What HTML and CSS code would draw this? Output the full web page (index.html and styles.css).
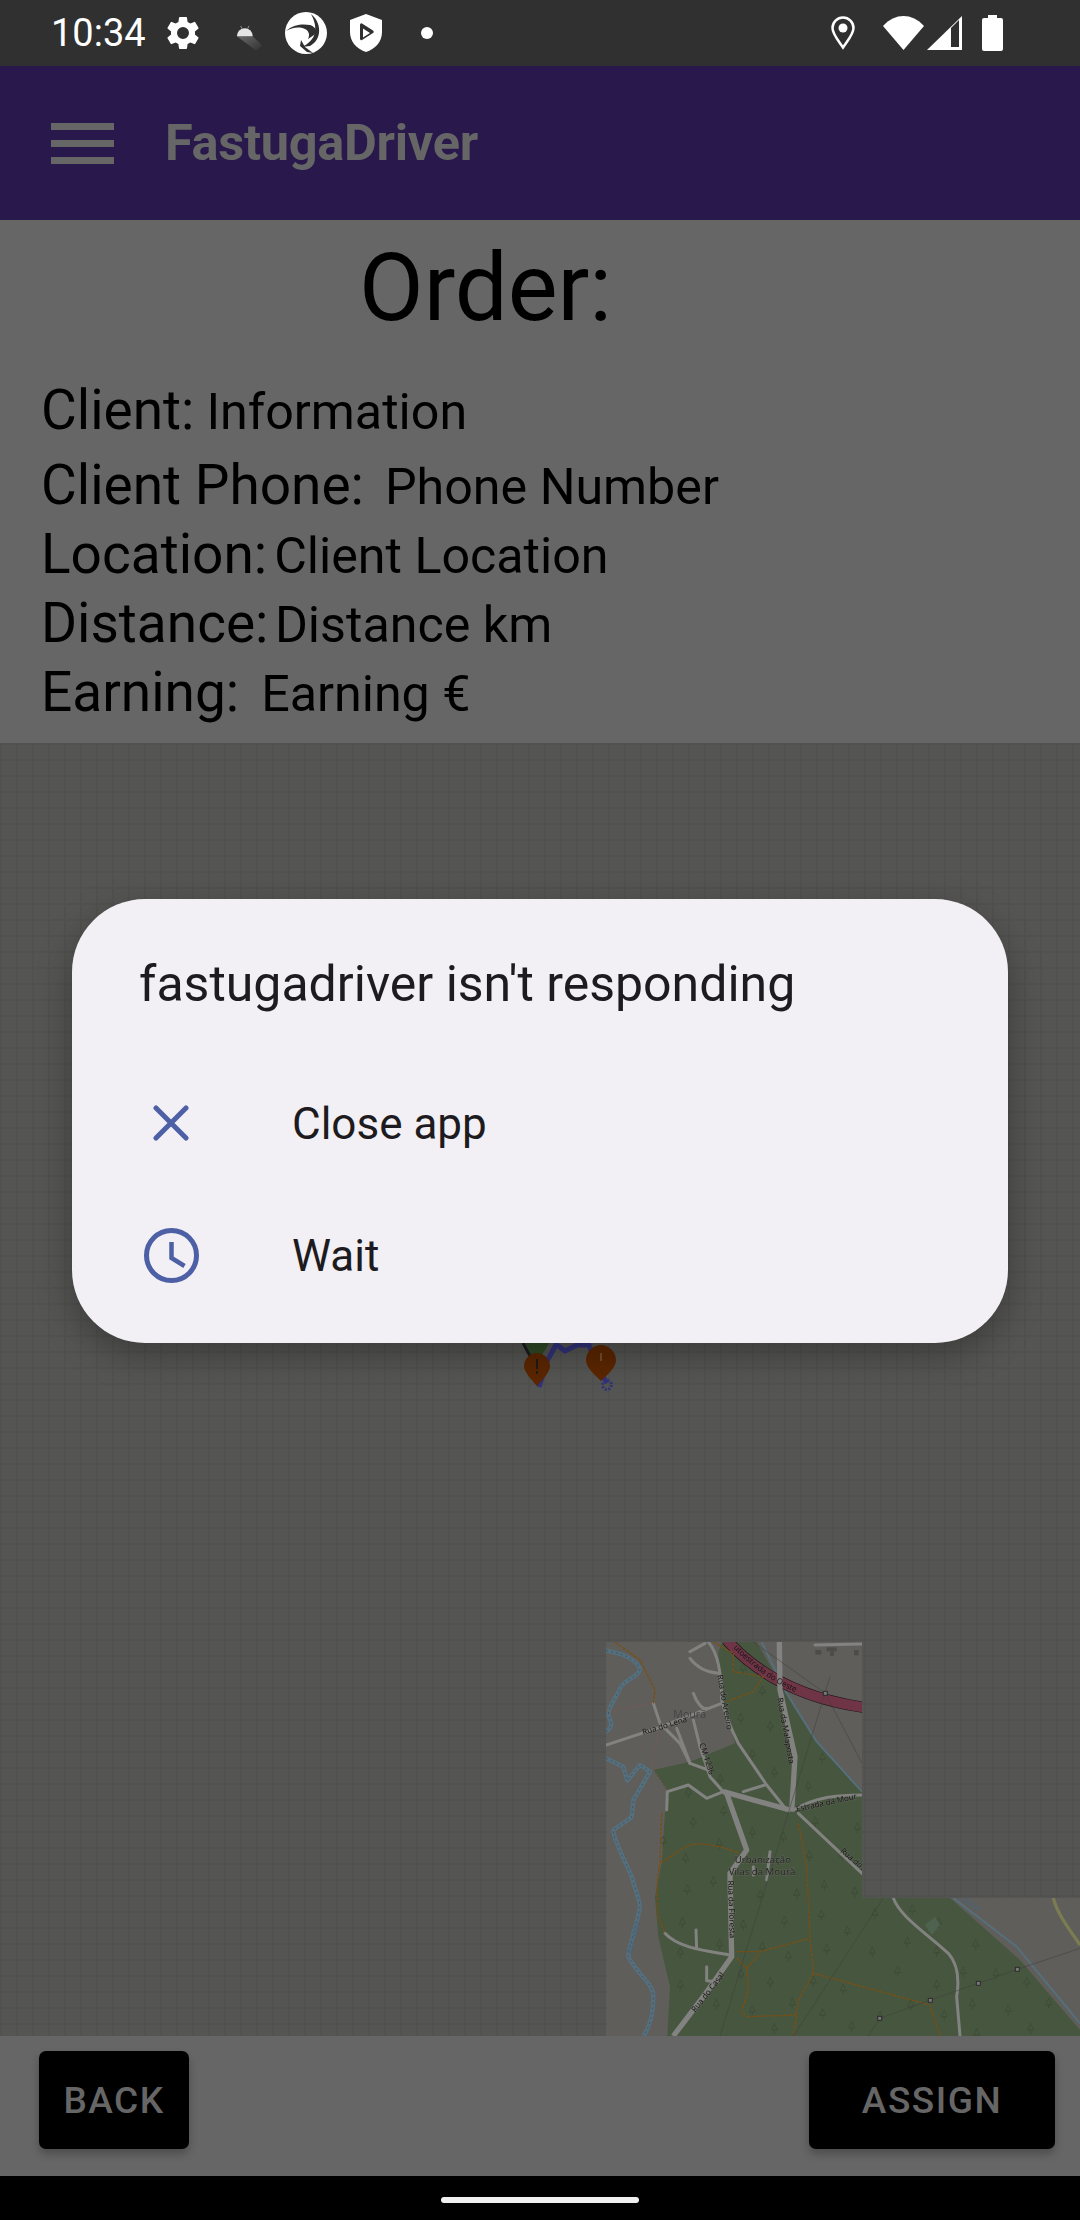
FILE: index.html
```html
<!DOCTYPE html>
<html lang="en">
<head>
<meta charset="utf-8">
<title>FastugaDriver</title>
<link rel="stylesheet" href="styles.css">
</head>
<body>
<div class="screen">
  <header class="status">
    <span class="time">10:34</span>
    <svg class="ic-gear" viewBox="0 0 24 24"><path fill="#fff" d="M19.14 12.94c.04-.3.06-.61.06-.94 0-.32-.02-.64-.07-.94l2.03-1.58a.49.49 0 0 0 .12-.61l-1.92-3.32a.49.49 0 0 0-.59-.22l-2.39.96c-.5-.38-1.03-.7-1.62-.94l-.36-2.54a.48.48 0 0 0-.48-.41h-3.84a.48.48 0 0 0-.47.41l-.36 2.54c-.59.24-1.13.57-1.62.94l-2.39-.96a.49.49 0 0 0-.59.22L2.74 8.87a.48.48 0 0 0 .12.61l2.03 1.58c-.05.3-.09.63-.09.94s.02.64.07.94l-2.03 1.58a.49.49 0 0 0-.12.61l1.92 3.32c.12.22.37.29.59.22l2.39-.96c.5.38 1.03.7 1.62.94l.36 2.54c.05.24.24.41.48.41h3.84c.24 0 .44-.17.47-.41l.36-2.54c.59-.24 1.13-.56 1.62-.94l2.39.96c.22.08.47 0 .59-.22l1.92-3.32a.48.48 0 0 0-.12-.61l-2.01-1.58zM12 15.6A3.6 3.6 0 1 1 12 8.4a3.6 3.6 0 0 1 0 7.2z"/></svg>
    <svg class="ic-android" viewBox="0 0 28 28"><defs><linearGradient id="shade" x1="0" y1="0" x2="1" y2="1"><stop offset="0" stop-color="#6a6a6a"/><stop offset="1" stop-color="#303030"/></linearGradient></defs><path fill="url(#shade)" d="M1 12h17l10 10-6 6z"/><path fill="#e4e4e4" d="M1 12a8.500 8.500 0 0 1 17 0z"/><path stroke="#999" stroke-width="1" d="M5 1l1.500 3M14 1l-1.500 3"/></svg>
    <svg class="ic-logo" viewBox="0 0 44 44"><circle cx="22" cy="22" r="21" fill="#fff"/><path fill="#303030" d="M2 20c8-7 17-7 24-6 4 1 7 5 7 8l-9 6c2-4 1-8-3-10-7-3-13-1-19 2z"/><path fill="#303030" d="M27 3c6 5 9 12 8 19-1 6-4 10-9 13l-8 1c6-3 12-8 13-15 1-7-1-12-4-18z"/><path fill="#303030" d="M17 29l4 7 8 6-6-1-7-6z"/></svg>
    <svg class="ic-shield" viewBox="0 0 32 38"><path fill="#fff" d="M16 0L32 6v12c0 10-7 17-16 20C7 35 0 28 0 18V6z"/><path fill="#303030" d="M10 11c0-1 1-2 2-1.500l11 7c1 .8 1 2 0 2.500l-11 7c-1 .5-2 0-2-1.500z"/><path fill="#fff" d="M13 14.500v9l7-4.500z"/></svg>
    <span class="dot"></span>
    <span class="spacer"></span>
    <svg class="ic-pin" viewBox="0 0 24 34"><path fill="none" stroke="#fff" stroke-width="2.500" d="M12 31.500C7 24 1.500 18 1.500 12a10.500 10.500 0 0 1 21 0c0 6-5.500 12-10.500 19.500z"/><circle cx="12" cy="12" r="4.500" fill="#fff"/></svg>
    <svg class="ic-wifi" viewBox="0 0 41 34"><path fill="#fff" d="M20.500 34L0 10C12-3.300 29-3.300 41 10z"/></svg>
    <svg class="ic-signal" viewBox="0 0 35 34"><path fill="#fff" d="M0 34L35 0v34z"/><path fill="#303030" d="M24 12l8-8v27h-8z"/></svg>
    <svg class="ic-battery" viewBox="0 0 21 36"><path fill="#fff" d="M6 0h9v3h4a2 2 0 0 1 2 2v29a2 2 0 0 1-2 2H2a2 2 0 0 1-2-2V5a2 2 0 0 1 2-2h4z"/></svg>
  </header>

  <div class="appbar">
    <div class="burger"><i></i><i></i><i></i></div>
    <span class="apptitle">FastugaDriver</span>
  </div>

  <section class="order">
    <h1 class="heading">Order:</h1>
    <div class="row row-first"><span class="label">Client:</span><span class="value v-client">Information</span></div>
    <div class="row"><span class="label">Client Phone:</span><span class="value v-phone">Phone Number</span></div>
    <div class="row"><span class="label">Location:</span><span class="value v-loc">Client Location</span></div>
    <div class="row"><span class="label">Distance:</span><span class="value v-dist">Distance km</span></div>
    <div class="row"><span class="label">Earning:</span><span class="value v-earn">Earning €</span></div>
  </section>

  <div class="map">
    <svg class="route" viewBox="0 0 120 70">
      <path fill="#2f4a26" d="M4 0h24l-8 14-4 8z" transform="translate(4 0)"/>
      <path fill="none" stroke="#1c1c1c" stroke-width="3" d="M6 0l12 22"/>
      <path fill="none" stroke="#32327a" stroke-width="5" d="M22 44l8-26 10-18M40 2l8 6 12-6 12 0 8 22 10 16"/>
      <circle cx="90" cy="42" r="4.500" fill="none" stroke="#32327a" stroke-width="3" stroke-dasharray="2 1.500"/>
      <path fill="#5c2600" d="M20 10c7 0 13 6 13 13 0 6-7 13-13 20C14 36 7 29 7 23c0-7 6-13 13-13z"/>
      <path stroke="#1c1c1c" stroke-width="2" d="M20 16v10M20 28v3"/>
      <path fill="#5c2600" d="M84 2c8 0 15 7 15 15 0 8-9 15-15 21-6-6-15-13-15-21C69 9 76 2 84 2z"/>
      <path stroke="#70502e" stroke-width="2" d="M84 10v8"/>
    </svg>
    <svg class="tiles" viewBox="48 66 1422 1182">
      <defs>
        <clipPath id="tile-clip"><path d="M48 66H816V834H1470V1248H48z"/></clipPath>
        <g id="tree"><path fill="none" stroke="#3b4834" stroke-width="2" d="M0 32V20M0 0L-9 20H9z"/></g>
      </defs>
      <g clip-path="url(#tile-clip)">
        <rect x="48" y="66" width="1422" height="1182" fill="#5f5e5a"/>
        <path fill="#47563f" d="M395 66H500L600 240L680 365L816 510L1080 834L1290 1020L1470 1230V1248H232L240 1100L205 950L195 830L215 730L225 580L230 510L190 450L300 425L435 370L395 230L385 100z"/>
        <g>
          <use href="#tree" x="460" y="130"/><use href="#tree" x="517" y="198"/><use href="#tree" x="452" y="280"/><use href="#tree" x="541" y="304"/><use href="#tree" x="487" y="388"/><use href="#tree" x="553" y="442"/><use href="#tree" x="391" y="462"/><use href="#tree" x="655" y="484"/><use href="#tree" x="697" y="398"/><use href="#tree" x="295" y="502"/><use href="#tree" x="401" y="558"/><use href="#tree" x="310" y="592"/><use href="#tree" x="487" y="622"/><use href="#tree" x="580" y="636"/><use href="#tree" x="676" y="590"/><use href="#tree" x="802" y="608"/><use href="#tree" x="219" y="648"/><use href="#tree" x="287" y="700"/><use href="#tree" x="388" y="656"/><use href="#tree" x="658" y="692"/><use href="#tree" x="757" y="690"/><use href="#tree" x="370" y="770"/><use href="#tree" x="292" y="794"/><use href="#tree" x="511" y="810"/><use href="#tree" x="620" y="806"/><use href="#tree" x="703" y="780"/><use href="#tree" x="794" y="800"/><use href="#tree" x="277" y="892"/><use href="#tree" x="460" y="900"/><use href="#tree" x="583" y="888"/><use href="#tree" x="694" y="870"/><use href="#tree" x="772" y="918"/><use href="#tree" x="855" y="866"/><use href="#tree" x="967" y="854"/><use href="#tree" x="1046" y="892"/><use href="#tree" x="952" y="950"/><use href="#tree" x="847" y="980"/><use href="#tree" x="1040" y="978"/><use href="#tree" x="1157" y="958"/><use href="#tree" x="389" y="958"/><use href="#tree" x="517" y="966"/><use href="#tree" x="710" y="972"/><use href="#tree" x="595" y="994"/><use href="#tree" x="271" y="982"/><use href="#tree" x="923" y="1038"/><use href="#tree" x="1120" y="1040"/><use href="#tree" x="1218" y="1046"/><use href="#tree" x="1310" y="1072"/><use href="#tree" x="453" y="1048"/><use href="#tree" x="541" y="1072"/><use href="#tree" x="670" y="1068"/><use href="#tree" x="760" y="1092"/><use href="#tree" x="1040" y="1080"/><use href="#tree" x="271" y="1080"/><use href="#tree" x="379" y="1138"/><use href="#tree" x="487" y="1156"/><use href="#tree" x="607" y="1134"/><use href="#tree" x="698" y="1166"/><use href="#tree" x="870" y="1174"/><use href="#tree" x="962" y="1140"/><use href="#tree" x="1063" y="1170"/><use href="#tree" x="1147" y="1138"/><use href="#tree" x="1255" y="1154"/><use href="#tree" x="1376" y="1134"/><use href="#tree" x="553" y="1210"/><use href="#tree" x="785" y="1204"/><use href="#tree" x="1322" y="1210"/><use href="#tree" x="1160" y="1226"/>
        </g>
        <path fill="#4f6250" d="M1005 915l30-25 15 25-25 30z"/>
        <g class="river-wide">
          <path d="M48 92C90 100 130 110 150 145C150 170 100 180 90 205C75 240 55 260 55 285C65 310 70 320 48 335"/>
          <path d="M48 415L100 440L112 482L150 435L180 455L130 540L125 592L70 630C70 660 100 710 125 770C135 810 150 840 150 860C140 920 115 980 115 1010C140 1060 190 1090 190 1130C190 1180 180 1220 160 1248"/>
        </g>
        <g class="river-core">
          <path d="M48 92C90 100 130 110 150 145C150 170 100 180 90 205C75 240 55 260 55 285C65 310 70 320 48 335"/>
          <path d="M48 415L100 440L112 482L150 435L180 455L130 540L125 592L70 630C70 660 100 710 125 770C135 810 150 840 150 860C140 920 115 980 115 1010C140 1060 190 1090 190 1130C190 1180 180 1220 160 1248"/>
        </g>
        <g class="stream">
          <path d="M515 66L590 220L680 365L816 515"/>
          <path d="M1090 834L1280 980L1470 1210"/>
        </g>
        <path fill="none" stroke="#1d1518" stroke-width="34" d="M410 60C490 150 620 232 820 262"/>
        <path fill="none" stroke="#6f3547" stroke-width="30" d="M410 60C490 150 620 232 820 262"/>
        <path fill="none" stroke="#7c7c52" stroke-width="10" d="M1390 834C1400 880 1440 930 1470 975"/>
        <g class="road">
          <path d="M355 66C385 100 395 170 395 240C410 300 430 340 445 370L530 495L590 570"/>
          <path d="M48 375L200 325L395 250"/>
          <path d="M190 250L210 310L270 370L300 430L355 450"/>
          <path d="M260 325L300 430"/>
          <path d="M310 300L330 380L360 470L400 515"/>
          <path d="M230 570L232 515L295 495L350 535L400 515"/>
          <path d="M610 570C680 530 740 525 816 525"/>
          <path d="M625 580L816 760"/>
          <path d="M910 834C930 890 1010 940 1075 1000C1110 1040 1105 1100 1100 1130L1110 1248"/>
          <path d="M225 940C260 980 330 990 420 1005"/>
          <path d="M318 930L320 985M350 1040L350 1082L385 1085"/>
          <path d="M300 95L345 70M300 115Q330 155 385 160M310 220C320 250 340 270 350 265"/>
          <path d="M675 75L816 72M490 740V765M540 695L530 780"/>
          <path d="M460 515L525 495"/>
        </g>
        <g class="road-wide">
          <path d="M568 66L570 210L590 300L615 410L605 575"/>
          <path d="M400 515L600 570"/>
          <path d="M410 520L470 690L420 760L425 1010L340 1130L250 1248"/>
        </g>
        <g class="track">
          <path d="M75 66L150 120L195 210L190 250"/>
          <path d="M215 580L210 730C205 760 195 810 205 890L225 940"/>
          <path d="M213 728C250 710 280 672 320 672C370 672 410 685 450 700"/>
          <path d="M625 610L650 740L660 950L670 1060L1020 1155L1050 1248"/>
          <path d="M440 995L510 995L660 955"/>
          <path d="M440 1015L470 1045L510 1000"/>
          <path d="M470 1045L475 1110L455 1175L470 1190L620 1185L610 1248"/>
          <path d="M670 1060L625 1140L620 1185"/>
          <path d="M370 66L430 100L430 155L520 170L490 215L410 245"/>
        </g>
        <g class="redpath">
          <path d="M50 275L190 250"/>
          <path d="M205 335L185 440L230 510"/>
        </g>
        <g class="power">
          <path d="M720 170L390 1248"/>
          <path d="M490 66L706 220L816 430"/>
          <path d="M880 834L610 1248"/>
          <path d="M835 1248L870 1195L1020 1140L1165 1090L1282 1048L1470 985"/>
        </g>
        <g class="pylon">
          <rect x="700" y="214" width="12" height="12"/><rect x="863" y="1189" width="12" height="12"/><rect x="1015" y="1135" width="12" height="12"/><rect x="1159" y="1084" width="12" height="12"/><rect x="1276" y="1042" width="12" height="12"/>
        </g>
        <g fill="#4d4c49"><rect x="676" y="90" width="18" height="14"/><rect x="710" y="82" width="30" height="12"/><rect x="720" y="94" width="12" height="14"/><rect x="792" y="90" width="14" height="16"/></g>
        <path id="mway" fill="none" d="M420 74C495 152 570 205 668 236"/>
        <text class="lbl lbl-road lbl-nohalo"><textPath href="#mway" startOffset="14">utoestrada do Oeste</textPath></text>
        <text class="lbl lbl-place" x="250" y="294">Mourã</text>
        <text class="lbl lbl-road" transform="translate(160 345) rotate(-17)">Rua do Lena</text>
        <text class="lbl lbl-road" transform="translate(382 166) rotate(80)">Rua do Areeiro</text>
        <text class="lbl lbl-road" transform="translate(562 235) rotate(80)">Rua da Malaposta</text>
        <text class="lbl lbl-road" transform="translate(328 372) rotate(72)">CM 1236</text>
        <text class="lbl lbl-road" transform="translate(620 575) rotate(-12)">Estrada da Mour</text>
        <text class="lbl lbl-road" transform="translate(750 695) rotate(40)">Rua dos</text>
        <text class="lbl lbl-area" x="434" y="728">Urbanização</text>
        <text class="lbl lbl-area" x="416" y="766">Vilas da Mourã</text>
        <text class="lbl lbl-road" transform="translate(414 782) rotate(88)">Rua da Floresta</text>
        <text class="lbl lbl-road" transform="translate(316 1178) rotate(-52)">Rua do Casal</text>
        <text class="lbl lbl-water" transform="translate(128 1004) rotate(-78)">Rio Lena</text>
        <text class="lbl lbl-water" transform="translate(1115 842) rotate(35)">neiro</text>
      </g>
    </svg>
  </div>

  <div class="actions">
    <button class="btn btn-back">BACK</button>
    <button class="btn btn-assign">ASSIGN</button>
  </div>

  <footer class="navbar"><span class="handle"></span></footer>

  <div class="dialog">
    <p class="dlg-title">fastugadriver isn't responding</p>
    <div class="dlg-item">
      <span class="dlg-icon"><svg class="ic-x" viewBox="0 0 36 36"><path fill="none" stroke="#4d5fa5" stroke-width="5" stroke-linecap="round" d="M3 3l30 30M33 3L3 33"/></svg></span>
      <span class="dlg-text">Close app</span>
    </div>
    <div class="dlg-item">
      <span class="dlg-icon"><svg class="ic-clock" viewBox="0 0 55 55"><circle cx="27.500" cy="27.500" r="25" fill="none" stroke="#4d5fa5" stroke-width="5"/><path fill="none" stroke="#4d5fa5" stroke-width="4.500" d="M27.500 14v16l13 8"/></svg></span>
      <span class="dlg-text">Wait</span>
    </div>
  </div>
</div>
</body>
</html>
```
FILE: styles.css
```css
* { box-sizing: border-box; }
html, body { margin: 0; padding: 0; }
body { width: 1080px; height: 2220px; overflow: hidden; font-family: Roboto, "Liberation Sans", sans-serif; background: #000; }
.screen { position: relative; width: 1080px; height: 2220px; display: flex; flex-direction: column; }

.status { height: 66px; flex: none; background: #303030; display: flex; align-items: center; padding-left: 51px; color: #fff; }
.time { font-size: 38px; width: 96px; line-height: 66px; }
.status svg { display: block; flex: none; }
.ic-gear { width: 40px; height: 40px; margin-left: 16px; }
.ic-android { width: 26px; height: 26px; margin-left: 33px; margin-top: 10px; }
.ic-logo { width: 44px; height: 44px; margin-left: 22px; }
.ic-shield { width: 32px; height: 38px; margin-left: 22px; }
.dot { width: 12px; height: 12px; border-radius: 50%; background: #fff; margin-left: 39px; }
.spacer { flex: 1; }
.ic-pin { width: 24px; height: 34px; }
.ic-wifi { width: 41px; height: 34px; margin-left: 28px; }
.ic-signal { width: 35px; height: 34px; margin-left: 3px; }
.ic-battery { width: 21px; height: 36px; margin-left: 20px; margin-right: 77px; }

.appbar { height: 154px; flex: none; background: #29184b; display: flex; align-items: center; padding-left: 51px; color: #666; }
.burger { width: 63px; display: flex; flex-direction: column; gap: 10px; }
.burger i { display: block; height: 7px; background: #666; }
.apptitle { font-size: 50.500px; font-weight: 700; letter-spacing: -0.3px; margin-left: 51px; line-height: 56px; }

.order { height: 523px; flex: none; background: #666; color: #000; padding-left: 41px; }
.heading { margin: 0; padding-left: 318px; font-weight: 400; font-size: 94px; line-height: 110px; height: 156px; padding-top: 13px; }
.row { display: flex; align-items: baseline; height: 69px; line-height: 69px; }
.row-first { height: 75px; }
.label { font-size: 55px; }
.value { font-size: 50.200px; }
.v-client { margin-left: 12px; }
.v-phone { margin-left: 21px; }
.v-loc { margin-left: 7px; }
.v-dist { margin-left: 6.500px; }
.v-earn { margin-left: 22px; }

.map { position: relative; flex: 1; min-height: 0; overflow: hidden;
  background-color: #555553;
  background-image: linear-gradient(#515150 2px, transparent 2px), linear-gradient(90deg, #515150 2px, transparent 2px);
  background-size: 16px 16px; }
.tiles { position: absolute; left: 606px; top: 899px; width: 474px; height: 394px; display: block; filter: blur(0.5px); }
.route { position: absolute; left: 517px; top: 600px; width: 120px; height: 70px; }
.river-wide path { fill: none; stroke: #566f7c; stroke-width: 13; stroke-linejoin: round; }
.river-core path { fill: none; stroke: #3c566b; stroke-width: 3; stroke-dasharray: 6 9; }
.stream path { fill: none; stroke: #566f7c; stroke-width: 6; }
.road path { fill: none; stroke: #828280; stroke-width: 9; stroke-linejoin: round; stroke-linecap: round; }
.road-wide path { fill: none; stroke: #828280; stroke-width: 16; stroke-linejoin: round; }
.track path { fill: none; stroke: #7b4f12; stroke-width: 4; stroke-dasharray: 10 4; }
.redpath path { fill: none; stroke: #8a5550; stroke-width: 2.500; stroke-dasharray: 5 6; }
.power path { fill: none; stroke: #3f3f3d; stroke-width: 1.500; }
.pylon rect { fill: #777; stroke: #2c2c2c; stroke-width: 3; }
.lbl { font-family: "Open Sans", "DejaVu Sans", sans-serif; fill: #111; paint-order: stroke; stroke: #77756f; stroke-width: 3px; stroke-opacity: .55; }
.lbl-nohalo { stroke: none; }
.lbl-road { font-size: 24px; }
.lbl-place { font-size: 32px; fill: #444; stroke: none; }
.lbl-area { font-size: 29px; fill: #222; }
.lbl-water { font-size: 26px; fill: #45657f; font-style: italic; stroke: none; }

.actions { height: 140px; flex: none; background: #666; display: flex; justify-content: space-between; padding: 15px 25px 27px 39px; }
.btn { height: 98px; border: 0; border-radius: 7px; background: #000; color: #666; font-family: Roboto, "Liberation Sans", sans-serif; font-size: 37px; font-weight: 500; letter-spacing: 1.500px; padding: 0; box-shadow: 0 5px 8px rgba(0,0,0,.25); }
.btn-back { width: 150px; }
.btn-assign { width: 246px; }

.navbar { height: 44px; flex: none; background: #000; display: flex; justify-content: center; padding-top: 21px; }
.handle { width: 198px; height: 6px; border-radius: 3px; background: #f0f0f0; }

.dialog { position: absolute; left: 72px; top: 899px; width: 936px; height: 444px; background: #f2f0f5; border-radius: 73px; box-shadow: 0 12px 36px rgba(0,0,0,.3); color: #1d1b20; }
.dlg-title { margin: 0; padding: 55px 0 0 67px; font-size: 50px; line-height: 60px; height: 159px; }
.dlg-item { height: 132px; display: flex; align-items: center; }
.dlg-icon { width: 198px; display: flex; justify-content: center; flex: none; margin-right: 22px; padding-bottom: 2px; }
.dlg-text { font-size: 44px; line-height: 52px; }
.dlg-icon svg { display: block; }
.ic-x { width: 36px; height: 36px; }
.ic-clock { width: 55px; height: 55px; }
```
